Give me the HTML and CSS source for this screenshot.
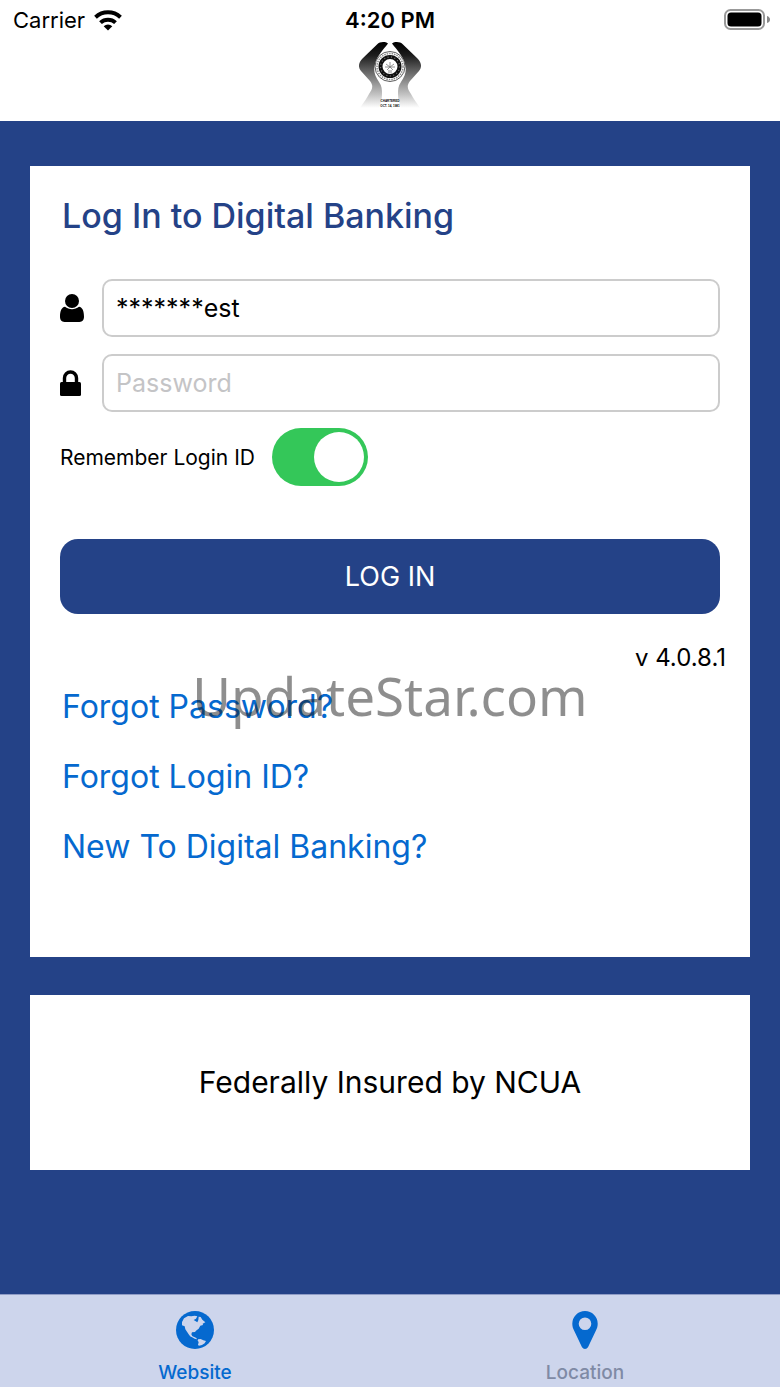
FILE: index.html
```html
<!DOCTYPE html>
<html lang="en">
  <head>
    <meta charset="utf-8" />
    <meta name="viewport" content="width=device-width,initial-scale=1" />
    <title>Digital Banking</title>
    <link rel="stylesheet" href="styles.css">
  </head>
  <body>
    <header>
      <div class="status-bar">
        <span class="carrier">
          Carrier
          <svg width="28" height="21" viewBox="0 0 28 21" aria-hidden="true">
            <g fill="none" stroke="#000" stroke-width="4">
              <path d="M1.500 7.200a18.500 18.500 0 0 1 25 0" />
              <path d="M6.500 12.600a11 11 0 0 1 15 0" />
            </g>
            <path d="M14 20.500l-4.300-4.300a6.100 6.100 0 0 1 8.600 0z" />
          </svg>
        </span>
        <span class="time">4:20 PM</span>
        <span class="battery">
          <svg width="46" height="22" viewBox="0 0 46 22" aria-hidden="true">
            <rect x="1" y="1" width="39" height="19" rx="5.500" fill="none" stroke="#999" stroke-width="2" />
            <rect x="3.500" y="3.500" width="34" height="14" rx="3.500" />
            <path d="M43 7q3 1 3 3.500t-3 3.500z" fill="#888" />
          </svg>
        </span>
      </div>
      <svg class="logo" width="66" height="70" viewBox="0 0 66 70" role="img" aria-label="Chartered Oct. 14, 1981">
        <defs>
          <linearGradient id="fade" x1="0" y1="0" x2="0" y2="1">
            <stop offset="0" stop-color="#000" />
            <stop offset=".2" stop-color="#1c1c1c" />
            <stop offset=".45" stop-color="#666" />
            <stop offset=".8" stop-color="#c4c4c4" />
            <stop offset="1" stop-color="#fff" />
          </linearGradient>
          <path id="hand" fill="url(#fade)" d="M31 1.500c-3-2-8-2-11 1L6 16c-5 5-5 9-2 13l9 10c4 5 2 9-1 13-2 4-5 8-9 14h19c2-5 3-9 3-14 0-4 0-8-3-12-4-6-6-11-4-18 2-8 8-14 13-20.500z" />
        </defs>
        <use href="#hand" />
        <use href="#hand" transform="matrix(-1 0 0 1 66 0)" />
        <circle cx="33" cy="24.500" r="15" fill="#fff" stroke="#333" stroke-width=".8" />
        <circle cx="33" cy="24.500" r="13" fill="none" stroke="#888" stroke-width="1.500" stroke-dasharray="1.500 1" />
        <circle cx="33" cy="24.500" r="9.500" fill="#fff" stroke="#111" stroke-width="4" />
        <circle cx="33" cy="24.500" r="9.500" fill="none" stroke="#777" stroke-width="1.200" stroke-dasharray="1 2.500" />
        <path d="M33 25v-5m0 5l-4-3m4 3l4-3m-4 3h-5m5 0h5m-5 0l-3 3m3-3l3 3m-4 0v3m2-3v3" fill="none" stroke="#777" stroke-width=".8" />
        <text x="33" y="60" class="logo-text">CHARTERED</text>
        <text x="33" y="65" class="logo-text">OCT. 14, 1981</text>
      </svg>
    </header>

    <main>
      <section class="card login">
        <h1>Log In to Digital Banking</h1>
        <form autocomplete="off">
          <div class="field">
            <label for="login-id" aria-label="Login ID">
              <svg width="24" height="28" viewBox="0 0 24 28" aria-hidden="true">
                <circle cx="12" cy="7" r="7" />
                <path d="M5 12.800c4 3.200 10 3.200 14 0 3.500.4 5 4.500 5 10 0 3-1.500 5.200-4.500 5.200h-15C1.500 28 0 25.800 0 22.800c0-5.500 1.500-9.600 5-10z" />
              </svg>
            </label>
            <input type="text" id="login-id" name="login" value="*******est" spellcheck="false" />
          </div>
          <div class="field">
            <label for="password" aria-label="Password">
              <svg width="22" height="26" viewBox="0 0 22 26" aria-hidden="true">
                <path d="M4.500 13V8a6 6 0 0 1 12 0v5" fill="none" stroke="#000" stroke-width="3.400" />
                <rect y="12" width="21" height="14" rx="1.500" />
              </svg>
            </label>
            <input type="password" id="password" name="password" placeholder="Password" />
          </div>
          <div class="remember">
            <label for="remember">Remember Login ID</label>
            <input type="checkbox" id="remember" name="remember" role="switch" checked />
          </div>
          <button type="button">LOG IN</button>
        </form>
        <p class="version">v 4.0.8.1</p>
        <ul class="links">
          <li><a href="#">Forgot Password?</a></li>
          <li><a href="#">Forgot Login ID?</a></li>
          <li><a href="#">New To Digital Banking?</a></li>
        </ul>
      </section>
      <section class="card insured">
        <p>Federally Insured by NCUA</p>
      </section>
    </main>

    <nav>
      <a href="#" class="active">
        <svg width="38" height="38" viewBox="0 0 114 114" aria-hidden="true">
          <circle cx="57" cy="57" r="57" fill="#0569cf" />
          <path fill="#cdd5ec" d="M18 33l6-11 12-7 10 1 10-2 8 2-4 7-7 4 5 3 6 4 3-7 1-10 6 1 5 8 9 8-8 4 1 4-8 2-5 9-8 6-3 4-9 1-2 6 4 7-5 1-5-5-6-9-6-9-2-9-8-3z" />
          <path fill="#cdd5ec" d="M47 75l8 3 6 3 2 4-7-2-9-5z" />
          <path fill="#cdd5ec" d="M66 85l8-1 8 4 8 2-4 7-8 5-9 2-3-2 2-9-3-4z" />
        </svg>
        Website
      </a>
      <a href="#">
        <svg width="26" height="38" viewBox="0 0 26 38" aria-hidden="true">
          <path fill="#0569cf" fill-rule="evenodd" d="M13 0a12.700 12.700 0 0 0-12.700 12.700c0 3 .8 5 2 7.300l7.600 16c1.400 2.600 4.800 2.600 6.200 0l7.600-16c1.200-2.300 2-4.300 2-7.300A12.700 12.700 0 0 0 13 0zm0 6.500a6.300 6.300 0 1 1 0 12.600 6.300 6.300 0 0 1 0-12.600z" />
        </svg>
        Location
      </a>
    </nav>

    <div class="watermark">UpdateStar.com</div>
  </body>
</html>
```

FILE: styles.css
```css
*,
:after,
:before {
  box-sizing: border-box;
}

body {
  position: relative;
  display: flex;
  flex-direction: column;
  min-height: 100vh;
  margin: 0;
  font-family: Inter, "Liberation Sans", sans-serif;
  color: #000;
  background-color: #244287;
}

h1,
p,
ul {
  margin: 0;
  padding: 0;
}

a {
  color: #0569cf;
  text-decoration: none;
}

svg {
  display: block;
}

header {
  height: 121px;
  background-color: #fff;
}

.status-bar {
  display: grid;
  grid-template-columns: 1fr auto 1fr;
  align-items: center;
  height: 40px;
  padding: 0 10px;
  font-size: 22px;
}

.carrier {
  display: flex;
  align-items: center;
  gap: 9px;
  padding-left: 3px;
}

.time {
  font-weight: 600;
}

.battery {
  justify-self: end;
}

.logo {
  margin: 2px auto 0;
}

.logo-text {
  font-family: "Liberation Sans", sans-serif;
  font-size: 3px;
  font-weight: bold;
  text-anchor: middle;
}

main {
  flex: 1;
  padding: 45px 30px;
}

.card {
  background-color: #fff;
}

.login {
  padding: 26px 30px 75px;
}

h1 {
  margin-bottom: 39px;
  padding-left: 2px;
  font-size: 34px;
  font-weight: 500;
  line-height: 48px;
  color: #244287;
}

.field {
  display: flex;
  align-items: center;
  margin-bottom: 17px;
}

.field label {
  width: 42px;
}

.field input {
  flex: 1;
  min-width: 0;
  height: 58px;
  padding: 0 12px;
  border: 2px solid #ccc;
  border-radius: 10px;
  background-color: #fff;
  font: inherit;
  font-size: 25px;
}

.field input::placeholder {
  color: #c4c4c6;
}

.remember {
  display: flex;
  align-items: center;
  gap: 17px;
  margin: -1px 0 53px;
  font-size: 21px;
}

.remember input {
  appearance: none;
  display: flex;
  justify-content: flex-end;
  width: 96px;
  height: 58px;
  margin: 0;
  padding: 4px;
  border-radius: 29px;
  background-color: #34c759;
}

.remember input::before {
  content: "";
  width: 50px;
  height: 50px;
  border-radius: 50%;
  background-color: #fff;
}

.remember input:not(:checked) {
  justify-content: flex-start;
  background-color: #e9e9ea;
}

button {
  display: block;
  width: 100%;
  height: 75px;
  border: 0;
  border-radius: 18px;
  background-color: #244287;
  color: #fff;
  font: inherit;
  font-size: 27px;
}

.version {
  margin: 30px -6px 0 0;
  font-size: 24px;
  line-height: 28px;
  text-align: right;
}

.links {
  padding-left: 2px;
  list-style: none;
  font-size: 32px;
  line-height: 70px;
}

.insured {
  margin-top: 38px;
  padding: 64px 30px;
  font-size: 30px;
  line-height: 47px;
  text-align: center;
}

nav {
  position: sticky;
  bottom: 0;
  display: flex;
  height: 93px;
  border-top: 1px solid #8f9cc6;
  background-color: #cdd5ec;
}

nav a {
  flex: 1;
  display: flex;
  flex-direction: column;
  align-items: center;
  gap: 12px;
  padding-top: 16px;
  font-size: 19px;
  font-weight: 500;
  line-height: 24px;
  color: #7f8aa5;
}

nav a.active {
  color: #0569cf;
}

.watermark {
  position: absolute;
  top: 50%;
  left: 0;
  right: 0;
  font-family: "Noto Sans", sans-serif;
  font-size: 53px;
  line-height: 60px;
  margin-top: -28px;
  text-align: center;
  color: rgba(30, 30, 30, 0.5);
  pointer-events: none;
}
```
